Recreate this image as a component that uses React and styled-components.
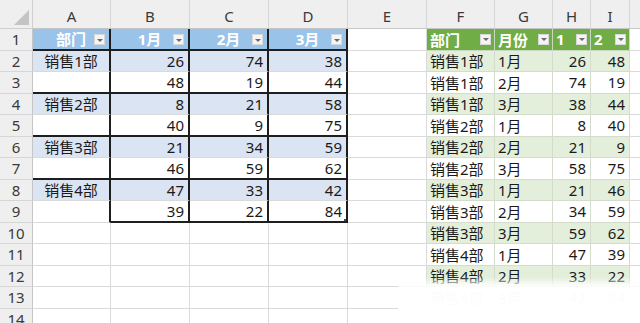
import React from 'react'
import styled, { createGlobalStyle } from 'styled-components'

const GlobalStyle = createGlobalStyle`
  html, body {
    margin: 0;
    padding: 0;
    background: #ffffff;
    overflow: hidden;
  }
  body {
    font-family: "Noto Sans", "Noto Sans CJK SC", sans-serif;
  }
`

const COLS = ['A', 'B', 'C', 'D', 'E', 'F', 'G', 'H', 'I', 'J']
const COL_WIDTHS = [33, 78, 79, 79, 79, 79, 68, 58, 38, 39, 40]
const ROW_COUNT = 14

const GRID = '#dadada'
const DARK = '#1e1e1e'
const BLUE_HEAD = '#9ac3ea'
const BLUE_BAND = '#dae4f3'
const GREEN_HEAD = '#70ad47'
const GREEN_BAND = '#e3efdb'

const LEFT_HEAD = ['部门', '1月', '2月', '3月']
const LEFT_DATA = [
  ['销售1部', 26, 74, 38],
  ['', 48, 19, 44],
  ['销售2部', 8, 21, 58],
  ['', 40, 9, 75],
  ['销售3部', 21, 34, 59],
  ['', 46, 59, 62],
  ['销售4部', 47, 33, 42],
  ['', 39, 22, 84],
]

const RIGHT_HEAD = ['部门', '月份', '1', '2']
const RIGHT_DATA = [
  ['销售1部', '1月', 26, 48],
  ['销售1部', '2月', 74, 19],
  ['销售1部', '3月', 38, 44],
  ['销售2部', '1月', 8, 40],
  ['销售2部', '2月', 21, 9],
  ['销售2部', '3月', 58, 75],
  ['销售3部', '1月', 21, 46],
  ['销售3部', '2月', 34, 59],
  ['销售3部', '3月', 59, 62],
  ['销售4部', '1月', 47, 39],
  ['销售4部', '2月', 33, 22],
  ['销售4部', '3月', 42, 84],
]

const Page = styled.div`
  position: relative;
  width: 640px;
  height: 323px;
  overflow: hidden;
`

const Sheet = styled.div`
  display: grid;
  grid-template-columns: ${COL_WIDTHS.map(w => `${w}px`).join(' ')};
  grid-template-rows: 29px repeat(${ROW_COUNT}, 21.5px);
`

const Corner = styled.div`
  position: relative;
  box-sizing: border-box;
  background: #efefef;
  border-right: 1px solid #cfcfcf;
  border-bottom: 1px solid #cfcfcf;

  &::after {
    content: '';
    position: absolute;
    right: 3px;
    bottom: 3px;
    width: 0;
    height: 0;
    border-left: 15px solid transparent;
    border-bottom: 15px solid #c4c4c4;
  }
`

const ColHead = styled.div`
  box-sizing: border-box;
  display: flex;
  align-items: center;
  justify-content: center;
  padding-top: 3px;
  background: #efefef;
  border-right: 1px solid #d6d6d6;
  border-bottom: 1px solid #c6c6c6;
  color: #3a3a3a;
  font-size: 15px;
`

const RowHead = styled.div`
  box-sizing: border-box;
  display: flex;
  align-items: center;
  justify-content: center;
  background: #efefef;
  border-right: 1px solid #c6c6c6;
  border-bottom: 1px solid #d6d6d6;
  color: #3a3a3a;
  font-size: 15px;
`

const Cell = styled.div`
  position: relative;
  box-sizing: border-box;
  display: flex;
  align-items: center;
  justify-content: ${p => p.$align};
  padding: 0 ${p => (p.$align === 'flex-end' ? '4px' : '3px')} 0 3px;
  background: ${p => p.$bg};
  border-right: ${p => (p.$darkRight ? `2px solid ${DARK}` : `1px solid ${p.$line}`)};
  border-bottom: ${p => (p.$darkBottom ? `2px solid ${DARK}` : `1px solid ${p.$line}`)};
  color: ${p => (p.$head ? '#ffffff' : '#1a1a1a')};
  font-weight: ${p => (p.$head ? 700 : 400)};
  font-size: 15px;
  white-space: nowrap;
  overflow: hidden;
`

const HeadText = styled.span`
  flex: ${p => (p.$centered ? '1' : '0 1 auto')};
  text-align: ${p => (p.$centered ? 'center' : 'left')};
`

const FilterButton = styled.span`
  flex: none;
  position: ${p => (p.$floating ? 'absolute' : 'static')};
  right: 4px;
  top: 5px;
  margin-left: auto;
  width: 11px;
  height: 11px;
  box-sizing: border-box;
  background: #f4f4f4;
  border: 1px solid #d8d8d8;
  display: flex;
  align-items: center;
  justify-content: center;

  &::after {
    content: '';
    width: 0;
    height: 0;
    margin-top: 1px;
    border-left: 3px solid transparent;
    border-right: 3px solid transparent;
    border-top: 3px solid #6a6a6a;
  }
`

const FillHandle = styled.span`
  position: absolute;
  right: -2px;
  bottom: -2px;
  width: 4px;
  height: 4px;
  background: #3a4a6a;
`

const Fade = styled.div`
  position: absolute;
  left: 398px;
  top: 277px;
  width: 242px;
  height: 46px;
  background: linear-gradient(
    to bottom,
    rgba(255, 255, 255, 0) 0%,
    rgba(255, 255, 255, 0.85) 18%,
    rgba(255, 255, 255, 0.98) 28%,
    #ffffff 100%
  );
`

function leftCell(row, col) {
  // col 1..4 -> A..D, row 1..9
  const idx = col - 1
  const darkRight = true
  const darkBottom = (row === 1 || row === 3 || row === 5 || row === 7) || (row === 9 && col > 1)
  if (row === 1) {
    return {
      head: true,
      bg: BLUE_HEAD,
      align: 'center',
      content: LEFT_HEAD[idx],
      filter: 'floating',
      darkRight,
      darkBottom,
      line: GRID,
    }
  }
  const value = LEFT_DATA[row - 2][idx]
  return {
    bg: row % 2 === 0 ? BLUE_BAND : '#ffffff',
    align: col === 1 ? 'center' : 'flex-end',
    content: value,
    darkRight,
    darkBottom,
    line: GRID,
    handle: row === 9 && col === 4,
  }
}

function rightCell(row, col) {
  // col 6..9 -> F..I, row 1..13
  const idx = col - 6
  if (row === 1) {
    return {
      head: true,
      bg: GREEN_HEAD,
      align: 'flex-start',
      content: RIGHT_HEAD[idx],
      filter: 'inline',
      line: '#c9d9bf',
    }
  }
  const value = RIGHT_DATA[row - 2][idx]
  return {
    bg: row % 2 === 0 ? GREEN_BAND : '#ffffff',
    align: idx < 2 ? 'flex-start' : 'flex-end',
    content: value,
    line: '#d3dccd',
  }
}

function cellFor(row, col) {
  if (col >= 1 && col <= 4 && row >= 1 && row <= 9) return leftCell(row, col)
  if (col >= 6 && col <= 9 && row >= 1 && row <= 13) return rightCell(row, col)
  return { bg: '#ffffff', align: 'flex-start', content: '', line: GRID }
}

function SheetCell({ spec }) {
  const centered = spec.filter === 'floating'
  return (
    <Cell
      $bg={spec.bg}
      $align={spec.align}
      $head={spec.head}
      $darkRight={spec.darkRight}
      $darkBottom={spec.darkBottom}
      $line={spec.line}
    >
      {spec.filter ? (
        <>
          <HeadText $centered={centered}>{spec.content}</HeadText>
          <FilterButton $floating={centered} />
        </>
      ) : (
        spec.content
      )}
      {spec.handle && <FillHandle />}
    </Cell>
  )
}

export default function App() {
  const rows = []
  for (let r = 1; r <= ROW_COUNT; r++) {
    rows.push(<RowHead key={`rh${r}`}>{r}</RowHead>)
    for (let c = 1; c < COL_WIDTHS.length; c++) {
      rows.push(<SheetCell key={`c${r}-${c}`} spec={cellFor(r, c)} />)
    }
  }

  return (
    <Page>
      <GlobalStyle />
      <Sheet>
        <Corner />
        {COLS.map(name => (
          <ColHead key={name}>{name === 'J' ? '' : name}</ColHead>
        ))}
        {rows}
      </Sheet>
      <Fade />
    </Page>
  )
}
